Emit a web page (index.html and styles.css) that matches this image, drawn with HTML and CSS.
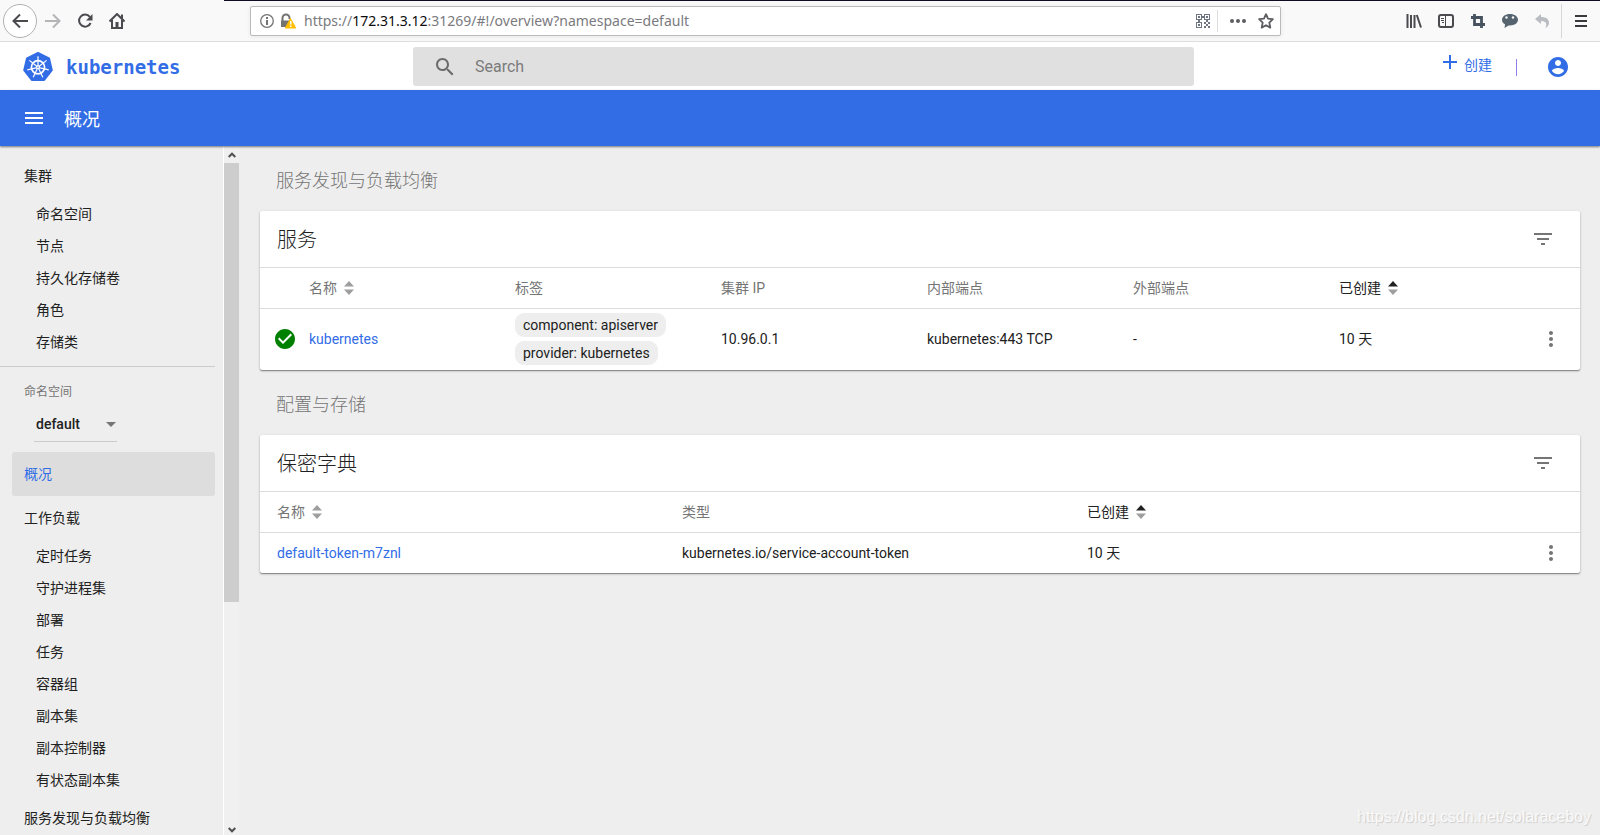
FILE: index.html
```html
<!DOCTYPE html>
<html lang="zh-CN">
<head>
<meta charset="utf-8">
<title>概况 - Kubernetes Dashboard</title>
<meta name="viewport" content="width=device-width, initial-scale=1">
<link rel="stylesheet" href="styles.css">
</head>
<body>
<svg class="defs" aria-hidden="true">
  <symbol id="sort" viewBox="0 0 10 14"><path class="sort-up" d="M0 5.500 5 0l5 5.500z"/><path d="M0 8.500h10L5 14z"/></symbol>
  <symbol id="filter" viewBox="0 0 24 24"><path d="M10 18h4v-2h-4v2zM3 6v2h18V6H3zm3 7h12v-2H6v2z"/></symbol>
  <symbol id="kebab" viewBox="6 0 12 24"><path d="M12 8c1.100 0 2-.9 2-2s-.9-2-2-2-2 .9-2 2 .9 2 2 2zm0 2c-1.100 0-2 .9-2 2s.9 2 2 2 2-.9 2-2-.9-2-2-2zm0 6c-1.100 0-2 .9-2 2s.9 2 2 2 2-.9 2-2-.9-2-2-2z"/></symbol>
</svg>

<div class="browser">
  <div class="browser-nav">
    <button class="back" type="button" aria-label="Back"><svg width="16" height="16" viewBox="0 0 16 16"><path d="M8 1.500 1.500 8 8 14.500M2 8h14" fill="none" stroke="#4a4a4f" stroke-width="2"/></svg></button>
    <button class="tool" type="button" aria-label="Forward"><svg width="16" height="16" viewBox="0 0 16 16"><path d="M8 1.500 14.500 8 8 14.500M14 8H0" fill="none" stroke="#b5b5b7" stroke-width="2"/></svg></button>
    <button class="tool" type="button" aria-label="Reload"><svg width="16" height="16" viewBox="0 0 16 16"><path d="M12.800 3.900A6 6 0 1 0 13.600 10" fill="none" stroke="#4a4a4f" stroke-width="2"/><path d="M15.500 1v6.500H9z" fill="#4a4a4f"/></svg></button>
    <button class="tool" type="button" aria-label="Home"><svg width="16" height="16" viewBox="0 0 16 16"><path d="M.5 8.500 8 1l7.500 7.500" fill="none" stroke="#4a4a4f" stroke-width="2"/><path d="M3 7v8h10V7" fill="none" stroke="#4a4a4f" stroke-width="2"/><path d="M6.500 9h3v6h-3z" fill="#4a4a4f"/><path d="M12 1.500h2V6h-2z" fill="#4a4a4f"/></svg></button>
  </div>
  <div class="url-bar">
    <svg width="14" height="14" viewBox="0 0 14 14"><circle cx="7" cy="7" r="6.300" fill="none" stroke="#737373" stroke-width="1.300"/><path d="M6 6h2v5H6zM6 3h2v2H6z" fill="#737373"/></svg>
    <svg width="16" height="16" viewBox="0 0 16 16"><path d="M2.500 8V5a3.500 3.500 0 0 1 7 0v1" fill="none" stroke="#737373" stroke-width="2"/><path d="M1 7.500h9V14H1z" fill="#737373"/><path d="M10.500 5.500 15.700 15H5.300z" fill="#ffbf00" stroke="#ffbf00"/><path d="M10 8h1.500v3.500H10zM10 12.500h1.500V14H10z" fill="#fff"/></svg>
    <div class="url" role="textbox" contenteditable="true" spellcheck="false" aria-label="Address">https://<b>172.31.3.12</b>:31269/#!/overview?namespace=default</div>
    <svg width="14" height="14" viewBox="0 0 14 14" fill="#6f7580"><path fill-rule="evenodd" d="M0 0h6v6H0zM1 1v4h4V1zM8 0h6v6H8zM9 1v4h4V1zM0 8h6v6H0zM1 9v4h4V9z"/><path d="M2 2h2v2H2zM10 2h2v2h-2zM2 10h2v2H2zM6 2h2v2H6zM2 6h2v2H2zM10 6h2v2h-2zM8 8h2v2H8zM12 8h2v2h-2zM10 10h2v2h-2zM8 12h2v2H8zM12 12h2v2h-2z"/></svg>
    <span class="url-sep"></span>
    <button class="tool" type="button" aria-label="Page actions"><svg width="16" height="16" viewBox="0 0 16 16" fill="#5c5c61"><circle cx="2" cy="8" r="2"/><circle cx="8" cy="8" r="2"/><circle cx="14" cy="8" r="2"/></svg></button>
    <button class="tool star" type="button" aria-label="Bookmark"><svg width="16" height="16" viewBox="0 0 16 16"><path d="m8 1.200 2 4.500 4.900.5-3.600 3.400 1 5L8 12.200l-4.300 2.400 1-5L1.100 6.200 6 5.700z" fill="none" stroke="#5c5c61" stroke-width="1.800" stroke-linejoin="round"/></svg></button>
  </div>
  <div class="browser-tools">
    <button class="tool" type="button" aria-label="Library"><svg width="16" height="16" viewBox="0 0 16 16"><path d="M1.500 1v14M5 2v13M8.500 2v13M10.800 2l4.200 12.500" fill="none" stroke="#4a4a4f" stroke-width="2"/></svg></button>
    <button class="tool" type="button" aria-label="Sidebars"><svg width="16" height="16" viewBox="0 0 16 16"><rect x="1" y="2" width="14" height="12" rx="2" fill="none" stroke="#4a4a4f" stroke-width="2"/><path d="M7.500 2v12M3 5.500h3M3 7.500h3M4 9.500h2" stroke="#4a4a4f" fill="none"/></svg></button>
    <button class="tool" type="button" aria-label="Screenshot"><svg width="16" height="16" viewBox="0 0 16 16"><path d="M4.500 1v10.500H15M1 4.500h10.500V15" fill="none" stroke="#46535f" stroke-width="2.800"/></svg></button>
    <button class="tool" type="button" aria-label="Chat"><svg width="16" height="16" viewBox="0 0 16 16"><path d="M8 1c4.400 0 8 2.400 8 5.800s-3.600 5.700-8 5.700l-1.500-.1L2.500 15l.6-3.600C1.200 10.400 0 8.800 0 6.800 0 3.400 3.600 1 8 1z" fill="#56646f"/><circle cx="4.500" cy="4.500" r="1.200" fill="#f9f9fa"/><circle cx="11" cy="4.500" r="1.200" fill="#f9f9fa"/></svg></button>
    <button class="tool" type="button" aria-label="Undo"><svg width="16" height="16" viewBox="0 0 16 16"><path d="M1 6 7 1v3c5 0 8 2 8 6 0 2.500-1.500 4-4 5 .8-1 1.300-2 1.300-3C12.300 9 10.500 8 7 8v3z" fill="#b9bdc1"/></svg></button>
    <span class="tools-sep"></span>
    <button class="tool" type="button" aria-label="Menu"><svg width="12" height="12" viewBox="0 0 12 12"><path d="M0 1h12M0 6h12M0 11h12" stroke="#3a3a3e" stroke-width="2"/></svg></button>
  </div>
</div>

<header class="header">
  <a class="brand" href="#">
    <svg width="30" height="30" viewBox="0 0 30 30">
      <path d="M15 1 26 6.300 28.800 18.200 21.200 28H8.800L1.200 18.200 4 6.300z" fill="#326de6" stroke="#326de6" stroke-width="2" stroke-linejoin="round"/>
      <g fill="none" stroke="#fff"><circle cx="15" cy="15.300" r="6.600" stroke-width="1.700"/>
      <path stroke-width="1.200" d="M15 15.300V4.300M15 15.300l8.600-6.900M15 15.300l10.700 2.500M15 15.300l4.800 9.900M15 15.300l-4.800 9.900M15 15.300 4.300 17.800M15 15.300 6.400 8.400"/></g>
      <circle cx="15" cy="15.300" r="2" fill="#fff"/><circle cx="15" cy="15.300" r=".8" fill="#326de6"/>
    </svg>
    <span>kubernetes</span>
  </a>
  <label class="search">
    <svg width="24" height="24" viewBox="0 0 24 24" fill="#6b6b6b"><path d="M15.500 14h-.79l-.28-.27C15.410 12.590 16 11.110 16 9.500 16 5.910 13.090 3 9.500 3S3 5.910 3 9.500 5.910 16 9.500 16c1.610 0 3.090-.59 4.230-1.570l.27.28v.79l5 4.990L20.490 19l-4.990-5zm-6 0C7.010 14 5 11.990 5 9.500S7.010 5 9.500 5 14 7.010 14 9.500 11.990 14 9.500 14z"/></svg>
    <input type="search" placeholder="Search" aria-label="Search">
  </label>
  <div class="actions">
    <button class="create" type="button"><svg width="14" height="14" viewBox="0 0 14 14"><path d="M7 0v14M0 7h14" stroke="#326de6" stroke-width="2"/></svg><span>创建</span></button>
    <span class="actions-sep"></span>
    <button class="account" type="button" aria-label="Account"><svg width="24" height="24" viewBox="0 0 24 24" fill="#326de6"><path d="M12 2C6.480 2 2 6.480 2 12s4.480 10 10 10 10-4.480 10-10S17.520 2 12 2zm0 3c1.660 0 3 1.340 3 3s-1.340 3-3 3-3-1.340-3-3 1.340-3 3-3zm0 14.200c-2.500 0-4.710-1.280-6-3.220.030-1.990 4-3.080 6-3.080 1.990 0 5.970 1.090 6 3.080-1.290 1.940-3.500 3.220-6 3.220z"/></svg></button>
  </div>
</header>

<div class="toolbar">
  <button class="menu" type="button" aria-label="Toggle menu"><svg width="24" height="24" viewBox="0 0 24 24" fill="#fff"><path d="M3 18h18v-2H3v2zm0-5h18v-2H3v2zm0-7v2h18V6H3z"/></svg></button>
  <h1>概况</h1>
</div>

<div class="body">
  <nav class="sidebar">
    <a class="group" href="#">集群</a>
    <a class="item" href="#">命名空间</a>
    <a class="item" href="#">节点</a>
    <a class="item" href="#">持久化存储卷</a>
    <a class="item" href="#">角色</a>
    <a class="item" href="#">存储类</a>
    <div class="namespace">
      <label for="ns">命名空间</label>
      <div class="select">
        <select id="ns"><option>default</option></select>
        <svg width="10" height="5" viewBox="0 0 10 5"><path d="M0 0h10L5 5z" fill="#757575"/></svg>
      </div>
    </div>
    <a class="group active" href="#">概况</a>
    <a class="group" href="#">工作负载</a>
    <a class="item" href="#">定时任务</a>
    <a class="item" href="#">守护进程集</a>
    <a class="item" href="#">部署</a>
    <a class="item" href="#">任务</a>
    <a class="item" href="#">容器组</a>
    <a class="item" href="#">副本集</a>
    <a class="item" href="#">副本控制器</a>
    <a class="item" href="#">有状态副本集</a>
    <a class="group" href="#">服务发现与负载均衡</a>
  </nav>
  <div class="scrollbar" aria-hidden="true">
    <span class="scroll-arrow"><svg width="8" height="6" viewBox="0 0 8 6"><path d="m.7 5 3.300-3.300L7.300 5" fill="none" stroke="#505050" stroke-width="2"/></svg></span>
    <span class="scroll-track"><span class="scroll-thumb"></span></span>
    <span class="scroll-arrow down"><svg width="8" height="6" viewBox="0 0 8 6"><path d="m.7 1 3.300 3.300L7.300 1" fill="none" stroke="#505050" stroke-width="2"/></svg></span>
  </div>

  <main class="content">
    <h2>服务发现与负载均衡</h2>
    <section class="card">
      <div class="card-head"><h3>服务</h3><button type="button" aria-label="Filter"><svg width="24" height="24"><use href="#filter"/></svg></button></div>
      <table class="services">
        <colgroup><col class="col-status"><col><col><col><col><col><col><col class="col-menu"></colgroup>
        <thead><tr><th></th><th>名称 <svg class="sort" width="10" height="14"><use href="#sort"/></svg></th><th>标签</th><th>集群 IP</th><th>内部端点</th><th>外部端点</th><th class="sorted">已创建 <svg class="sort" width="10" height="14"><use href="#sort"/></svg></th><th></th></tr></thead>
        <tbody><tr>
          <td class="status"><svg width="24" height="24" viewBox="0 0 24 24" fill="#008000"><path d="M12 2C6.480 2 2 6.480 2 12s4.480 10 10 10 10-4.480 10-10S17.520 2 12 2zm-2 15-5-5 1.410-1.410L10 14.170l7.590-7.590L19 8l-9 9z"/></svg></td>
          <td><a href="#">kubernetes</a></td>
          <td><div class="chips"><span>component: apiserver</span><span>provider: kubernetes</span></div></td>
          <td>10.96.0.1</td><td>kubernetes:443 TCP</td><td>-</td><td>10 天</td>
          <td><button type="button" aria-label="More"><svg width="12" height="24"><use href="#kebab"/></svg></button></td>
        </tr></tbody>
      </table>
    </section>
    <h2>配置与存储</h2>
    <section class="card">
      <div class="card-head"><h3>保密字典</h3><button type="button" aria-label="Filter"><svg width="24" height="24"><use href="#filter"/></svg></button></div>
      <table class="secrets">
        <colgroup><col class="col-pad"><col><col><col><col class="col-end"><col class="col-menu"></colgroup>
        <thead><tr><th></th><th>名称 <svg class="sort" width="10" height="14"><use href="#sort"/></svg></th><th>类型</th><th class="sorted">已创建 <svg class="sort" width="10" height="14"><use href="#sort"/></svg></th><th></th><th></th></tr></thead>
        <tbody><tr><td></td><td><a href="#">default-token-m7znl</a></td><td>kubernetes.io/service-account-token</td><td>10 天</td><td></td>
          <td><button type="button" aria-label="More"><svg width="12" height="24"><use href="#kebab"/></svg></button></td></tr></tbody>
      </table>
    </section>
  </main>
</div>
<div class="watermark">https://blog.csdn.net/solaraceboy</div>
</body>
</html>
```
FILE: styles.css
```css
* { box-sizing: border-box; }
body {
  display: flex;
  flex-direction: column;
  height: 100vh;
  margin: 0;
  overflow: hidden;
  background: #eee;
  color: #212121;
  font: 14px/20px Roboto, "Noto Sans CJK SC", sans-serif;
}
button { display: flex; align-items: center; padding: 0; border: 0; background: none; font: inherit; color: inherit; }
svg { display: block; flex: none; }
a { color: #326de6; text-decoration: none; }
h1, h2, h3 { margin: 0; font-weight: 300; }
.defs { position: absolute; width: 0; height: 0; }

/* Browser chrome */
.browser {
  display: flex;
  flex: none;
  align-items: center;
  height: 42px;
  border-bottom: 1px solid #ddd;
  background: linear-gradient(#0c0c24, #0c0c24) 224px 0 / 100% 1px no-repeat #f9f9fa;
}
.browser-nav { display: flex; align-items: center; gap: 16px; width: 250px; padding-left: 3px; }
.back { justify-content: center; width: 34px; height: 34px; border: 1px solid #b1b1b3; border-radius: 50%; background: #fff; }
.back + .tool { margin-left: -8px; }
.url-bar {
  display: flex;
  flex: 1;
  align-items: center;
  gap: 6px;
  height: 30px;
  padding: 0 6px 0 9px;
  border: 1px solid #bbb;
  border-radius: 2px;
  background: #fff;
  box-shadow: 0 1px 4px rgba(0, 0, 0, .08);
}
.url { flex: 1; padding-left: 2px; overflow: hidden; color: #7a7a7e; font: 14px/20px "Noto Sans", sans-serif; white-space: nowrap; outline: 0; }
.url b { color: #0c0c0d; font-weight: 400; }
.url-sep { width: 1px; height: 22px; margin: 0 6px 0 1px; background: #ddd; }
.star { margin-left: 6px; }
.browser-tools { display: flex; align-items: center; gap: 16px; width: 319px; padding: 0 12px 0 125px; }
.tools-sep { width: 1px; height: 34px; margin: 0 -3px 0 -5px; background: #d7d7db; }

/* Dashboard header */
.header { display: flex; flex: none; align-items: center; height: 48px; background: #fff; }
.brand { display: flex; align-items: center; gap: 13px; width: 413px; padding: 2px 0 0 23px; font: bold 19px/24px "DejaVu Sans Mono", monospace; }
.search { display: flex; flex: 1; align-items: center; height: 39px; padding: 2px 19px 0 20px; gap: 18px; border-radius: 3px; background: #e0e0e0; }
.search input { flex: 1; min-width: 0; padding: 0; border: 0; background: none; font: 16px/24px Roboto, sans-serif; color: #212121; outline: 0; }
.search input::placeholder { color: #7b7b7b; opacity: 1; }
.actions { display: flex; align-items: center; justify-content: flex-end; width: 406px; padding: 2px 30px 0 0; color: #326de6; }
.create { gap: 7px; padding-bottom: 4px; }
.create svg { margin-bottom: 6px; }
.actions-sep { width: 1px; height: 17px; margin: 0 29px 0 24px; background: #8f7fe6; }

.toolbar { display: flex; flex: none; align-items: center; gap: 18px; height: 56px; padding-left: 22px; background: #326de6; color: #fff; box-shadow: 0 1px 2px rgba(0, 0, 0, .5); z-index: 1; }
.toolbar h1 { padding-top: 4px; font-size: 18px; font-weight: 400; line-height: 24px; }

/* Sidebar */
.body { display: flex; flex: 1; min-height: 0; }
.sidebar { width: 224px; padding: 8px 8px 0 0; overflow: hidden; border-right: 1px solid #fff; }
.group, .item { display: block; margin-left: 12px; padding: 0 12px; color: #212121; line-height: 44px; }
.item { padding-left: 24px; line-height: 32px; }
.active { border-radius: 3px; background: #ddd; color: #326de6; }
.namespace { height: 86px; margin: 8px 0 0; padding: 16px 0 0 24px; border-top: 1px solid #ccc; }
.namespace label { display: block; color: #757575; font-size: 12px; line-height: 18px; }
.select { display: flex; align-items: center; width: 83px; height: 35px; margin: 6px 0 0 10px; padding-right: 1px; border-bottom: 1px solid #ccc; }
.select select { flex: 1; min-width: 0; padding: 0 0 0 2px; border: 0; background: none; color: #212121; font: 500 14px/20px Roboto, sans-serif; appearance: none; }
.scrollbar { display: flex; flex-direction: column; width: 15px; background: #f0f0f0; }
.scroll-arrow { display: flex; align-items: center; justify-content: center; height: 17px; }
.down { align-items: flex-end; padding-bottom: 2px; }
.scroll-track { flex: 1; }
.scroll-thumb { display: block; height: 67%; background: #cdcdcd; }

/* Content */
.content { flex: 1; min-width: 0; padding: 9px 20px 0 21px; }
.content h2 { padding: 14px 15px 18px 16px; color: #757575; font-size: 18px; line-height: 24px; }
.card { margin-bottom: 9px; border-radius: 2px; background: #fff; box-shadow: 0 1px 3px rgba(0, 0, 0, .2), 0 1px 1px rgba(0, 0, 0, .35); }
.card-head { display: flex; align-items: center; justify-content: space-between; height: 56px; padding: 0 25px 0 17px; }
.card-head h3 { padding-top: 2px; font-size: 20px; line-height: 28px; }
.card button svg { fill: #757575; }
table { width: 100%; border-collapse: collapse; table-layout: fixed; }
th, td { height: 41px; padding: 0; border-top: 1px solid #ddd; text-align: left; white-space: nowrap; }
th { color: #757575; font-weight: 400; }
.services td { height: 61px; }
.col-status { width: 49px; }
.col-pad { width: 17px; }
.col-end { width: 53px; }
.col-menu { width: 35px; }
.status { padding-left: 13px; }
.sort { display: inline-block; margin-left: 4px; vertical-align: -2px; fill: #9e9e9e; }
.sorted { color: #212121; --sort-up: #212121; }
.sort-up { fill: var(--sort-up, #9e9e9e); }
.chips { display: flex; flex-direction: column; align-items: flex-start; gap: 4px; }
.chips span { padding: 2px 8px; border-radius: 9px; background: #eee; }

.watermark { position: absolute; right: 9px; bottom: 6px; color: #fafafa; font: 16px/24px "Liberation Sans", sans-serif; text-shadow: 1px 1px 1px #ccc; }
```
